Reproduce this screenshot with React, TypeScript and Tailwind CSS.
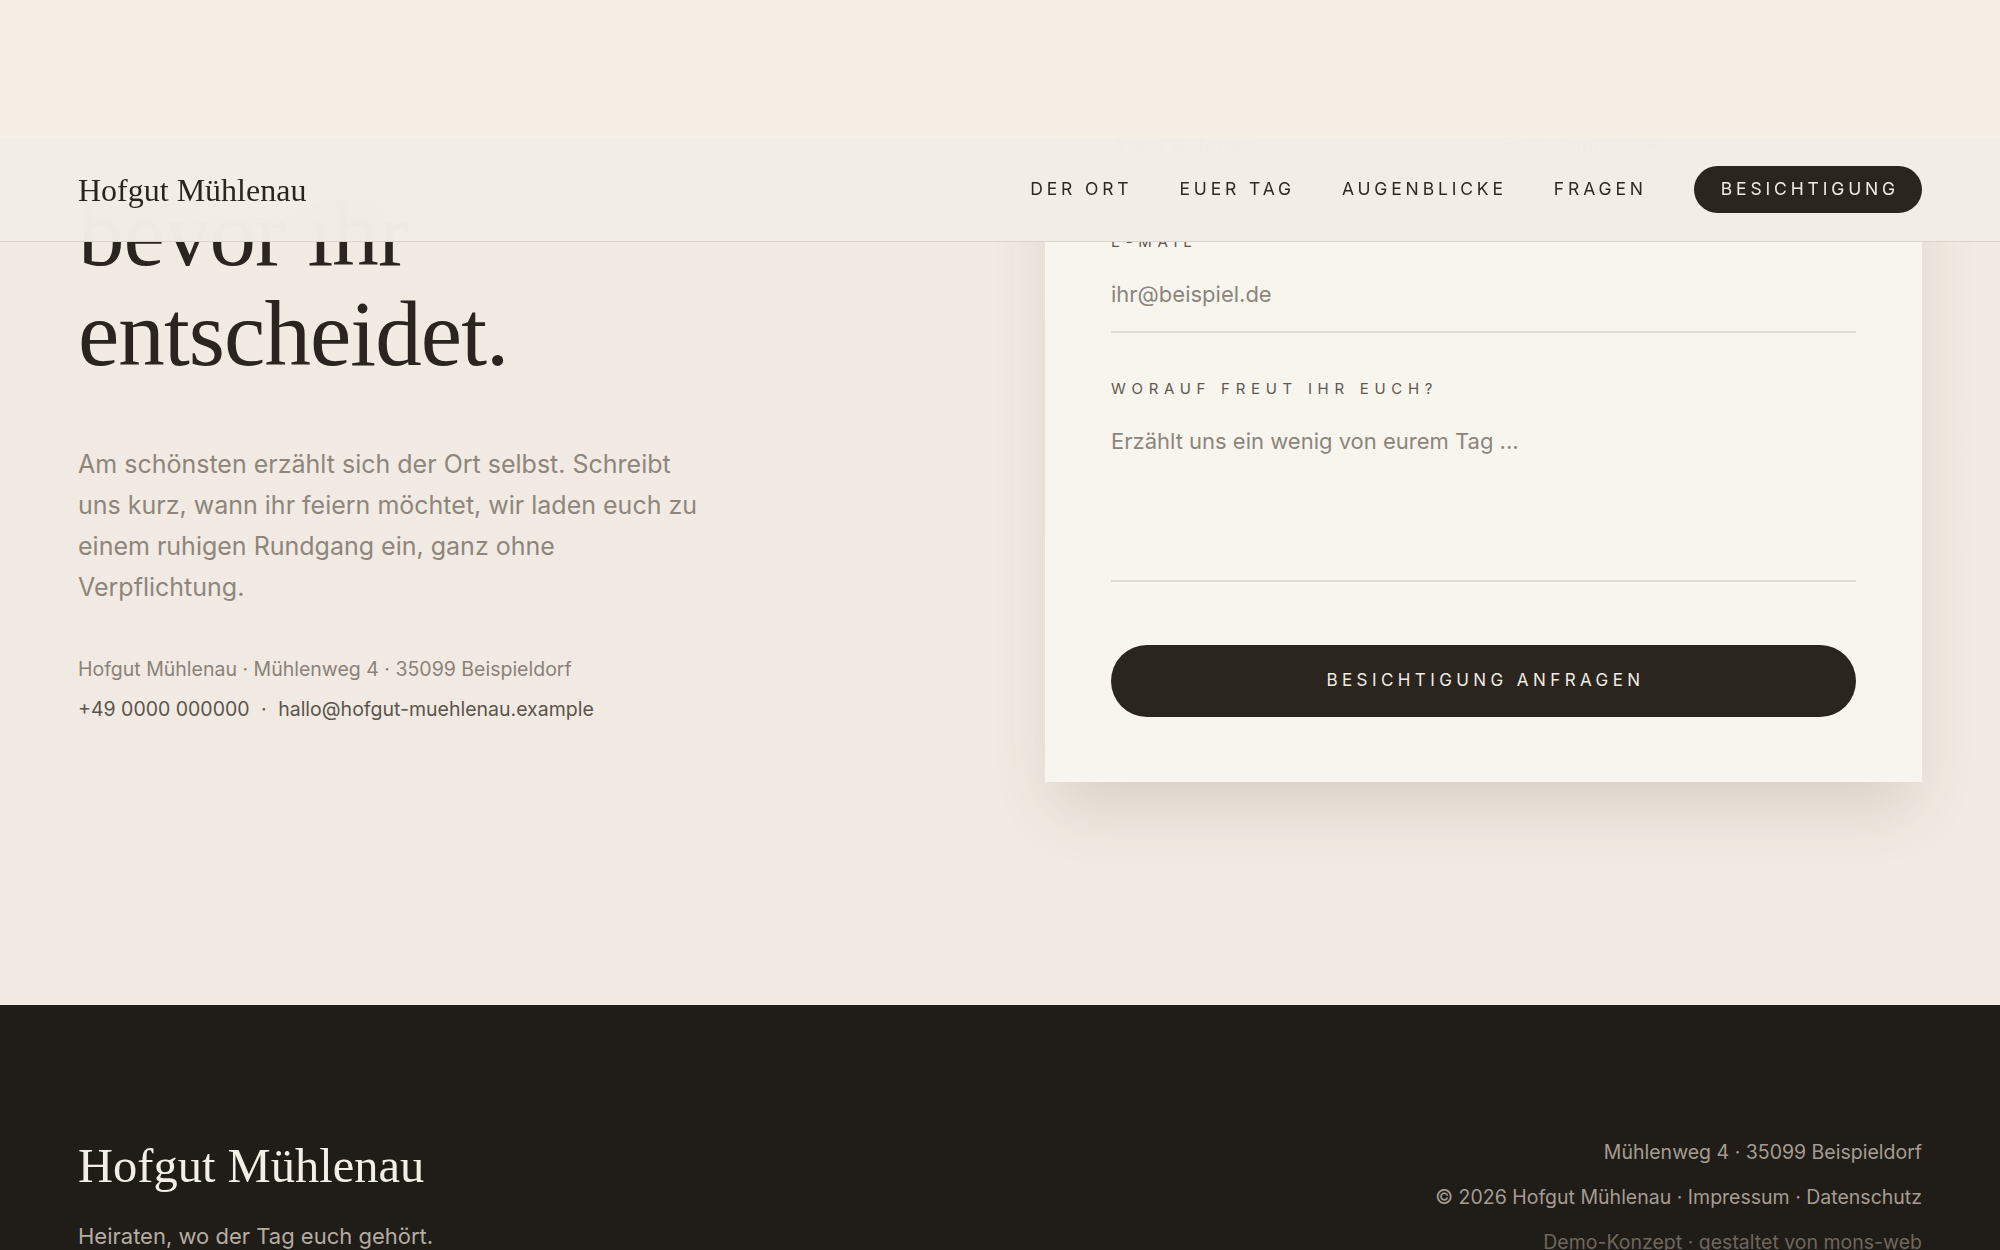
const NAV = ["Der Ort", "Euer Tag", "Augenblicke", "Fragen"];

const serif = "font-['Liberation_Serif','Times_New_Roman',serif]";

function Label({ children }: { children: React.ReactNode }) {
  return (
    <label className="block text-[15px] leading-[20px] tracking-[0.38em] uppercase text-[#5f5850] mb-[16px]">
      {children}
    </label>
  );
}

function Field({ label, placeholder, type = "text" }: { label: string; placeholder: string; type?: string }) {
  return (
    <div>
      <Label>{label}</Label>
      <input
        type={type}
        placeholder={placeholder}
        className="block w-full bg-transparent border-b-2 border-[#e0dbd3] pt-[12px] pb-[23px] text-[22px] leading-[28px] text-[#2a2520] placeholder:text-[#8c857c] outline-none"
      />
    </div>
  );
}

export default function App() {
  return (
    <div className="relative h-[1250px] overflow-hidden bg-[#f0eae2] font-['Inter',sans-serif] text-[#2a2520]">
      <main>
        {/* Besichtigung */}
        <section className="grid grid-cols-[1fr_877px] px-[78px] pt-[22px] pb-[223px] bg-gradient-to-b from-[#f1ebe3] to-[#f0eae2]">
          <div className="pt-[162px]">
            <h2 className={`${serif} text-[93px] leading-[100px] tracking-[-0.01em] text-[#2a2520]`}>
              bevor ihr
              <br />
              entscheidet.
            </h2>
            <p className="mt-[60px] max-w-[630px] text-[25px] leading-[41px] text-[#8e867c]">
              Am schönsten erzählt sich der Ort selbst. Schreibt uns kurz, wann ihr feiern möchtet, wir
              laden euch zu einem ruhigen Rundgang ein, ganz ohne Verpflichtung.
            </p>
            <div className="mt-[41px] text-[19.5px] leading-[40px]">
              <p className="text-[#8a8279]">Hofgut Mühlenau · Mühlenweg 4 · 35099 Beispieldorf</p>
              <p className="text-[#5b544c]">
                +49 0000 000000 <span className="mx-[6px]">·</span> hallo@hofgut-muehlenau.example
              </p>
            </div>
          </div>

          <form className="bg-[#f8f5ef] px-[66px] pt-[63px] pb-[65px] shadow-[0_34px_60px_-12px_rgba(90,70,45,0.16)]">
            <div className="grid grid-cols-2 gap-[40px]">
              <Field label="Eure Namen" placeholder="Anna & Jonas" />
              <Field label="Wunschdatum" placeholder="z. B. Juni 2026" />
            </div>
            <div className="mt-[46px]">
              <Field label="E-Mail" placeholder="ihr@beispiel.de" type="email" />
            </div>
            <div className="mt-[46px]">
              <Label>Worauf freut ihr euch?</Label>
              <textarea
                placeholder="Erzählt uns ein wenig von eurem Tag ..."
                className="block w-full h-[167px] resize-none bg-transparent border-b-2 border-[#e0dbd3] pt-[12px] text-[22px] leading-[28px] text-[#2a2520] placeholder:text-[#8c857c] outline-none"
              />
            </div>
            <button
              type="button"
              className="mt-[63px] w-full h-[72px] rounded-full bg-[#2b2520] text-[#f1ebe2] text-[17px] tracking-[0.26em] uppercase pl-[4px]"
            >
              Besichtigung anfragen
            </button>
          </form>
        </section>

        <footer className="bg-[#201c17] flex justify-between items-start px-[78px] pt-[125px] pb-[80px]">
          <div className="pt-[12px]">
            <div className={`${serif} text-[48.5px] leading-none text-[#f3eee6]`}>Hofgut Mühlenau</div>
            <p className="mt-[28px] text-[22px] leading-[34px] text-[#b5ada2]">Heiraten, wo der Tag euch gehört.</p>
          </div>
          <div className="text-right text-[19.5px] leading-[45px]">
            <p className="text-[#a59d93]">Mühlenweg 4 · 35099 Beispieldorf</p>
            <p className="text-[#a59d93]">© 2026 Hofgut Mühlenau · Impressum · Datenschutz</p>
            <p className="text-[#6f675d]">Demo-Konzept · gestaltet von mons-web</p>
          </div>
        </footer>
      </main>

      {/* top strip + sticky navigation */}
      <div className="absolute inset-x-0 top-0 h-[138px] bg-[#f6efe6]" />
      <header className="absolute inset-x-0 top-[138px] h-[104px] flex items-center justify-between px-[78px] bg-[#f2ede6]/[0.97] backdrop-blur-2xl border-b border-[#d9d3ca]">
        <div className={`${serif} text-[32px] leading-none text-[#2a2520]`}>Hofgut Mühlenau</div>
        <nav className="flex items-center gap-[47px]">
          {NAV.map((item) => (
            <a key={item} href="#" className="text-[17.5px] tracking-[0.22em] uppercase text-[#2e2924]">
              {item}
            </a>
          ))}
          <a
            href="#"
            className="h-[47px] flex items-center pl-[27px] pr-[23px] rounded-full bg-[#2b2520] text-[#f1ebe2] text-[17.5px] tracking-[0.22em] uppercase"
          >
            Besichtigung
          </a>
        </nav>
      </header>
    </div>
  );
}
